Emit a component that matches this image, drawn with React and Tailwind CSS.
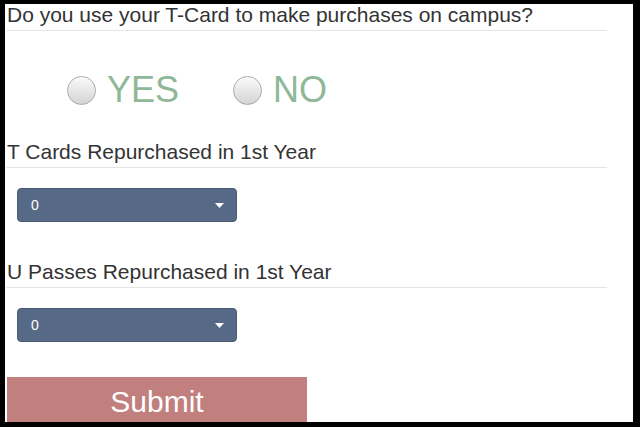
import React from "react";

const font = { fontFamily: "'Liberation Sans', Arial, sans-serif" };

const Radio = ({ label }) => {
   return (
      <label className="flex items-center gap-[11px] cursor-pointer">
         <span className="w-[29px] h-[29px] rounded-full border border-[#a9a9a9] bg-gradient-to-b from-[#fafafa] to-[#d4d4d4] shadow-[inset_0_1px_1px_rgba(255,255,255,0.9)]"></span>
         <span className="text-[36px] leading-[48px] text-[#8fb898]">{label}</span>
      </label>
   );
};

const Heading = ({ children, className = "" }) => {
   return (
      <div className={"ml-[1px] w-[601px] h-[27px] border-b border-[#e5e5e5] pl-[1px] text-[21px] leading-[22px] text-[#333]" + " " + className}>
         {children}
      </div>
   );
};

const Select = ({ className = "" }) => {
   return (
      <div className={"ml-[12px] w-[220px] h-[34px] rounded-[4px] bg-[#566a88] border border-[#4a5c77] flex items-center justify-between pl-[13px] pr-[12px] text-[14px] text-white" + " " + className}>
         <span>0</span>
         <svg width="9" height="5" viewBox="0 0 9 5">
            <path d="M0 0 L9 0 L4.5 5 Z" fill="#fff" />
         </svg>
      </div>
   );
};

const App = () => {
   return (
      <div className="w-[640px] h-[427px] bg-black pt-[4px] pl-[5px] pr-[7px] pb-[5px]" style={font}>
         <div className="w-full h-full bg-white overflow-hidden">
            <div className="ml-[1px] w-[601px] h-[27px] border-b border-[#e5e5e5] pl-[1px] text-[21px] leading-[22px] text-[#333]">
               Do you use your T-Card to make purchases on campus?
            </div>

            <div className="flex items-center mt-[35px] pl-[62px] gap-[54px] h-[48px]">
               <Radio label="YES" />
               <Radio label="NO" />
            </div>

            <Heading className="mt-[27px]">T Cards Repurchased in 1st Year</Heading>
            <Select className="mt-[20px]" />

            <Heading className="mt-[39px]">U Passes Repurchased in 1st Year</Heading>
            <Select className="mt-[20px]" />

            <button className="mt-[35px] ml-[2px] w-[300px] h-[50px] bg-[#c17f7e] text-white text-[30px] leading-[50px] text-center">
               Submit
            </button>
         </div>
      </div>
   );
};

export default App;
